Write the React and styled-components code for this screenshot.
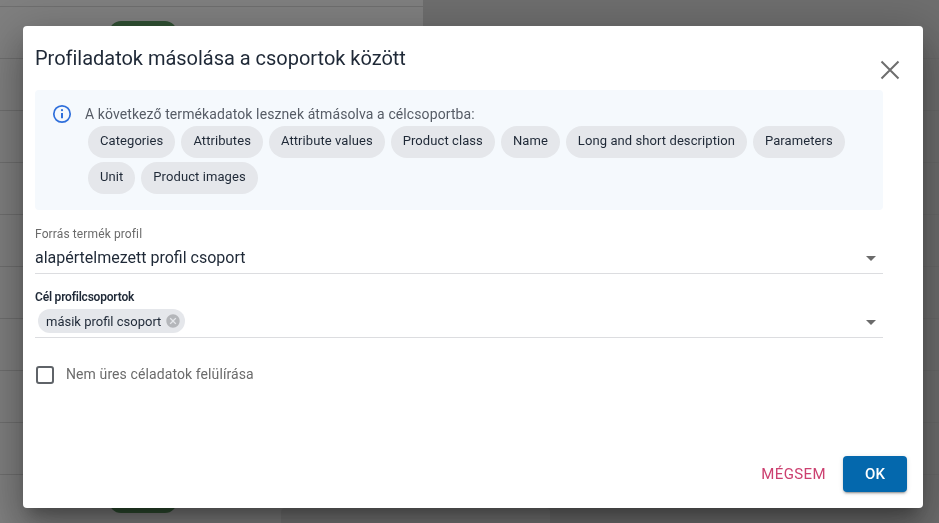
import React from "react";
import styled, { createGlobalStyle } from "styled-components";

const profileFields = [
  "Categories",
  "Attributes",
  "Attribute values",
  "Product class",
  "Name",
  "Long and short description",
  "Parameters",
  "Unit",
  "Product images",
];

const GlobalStyle = createGlobalStyle`
  html, body {
    margin: 0;
    height: 100%;
    overflow: hidden;
    font-family: Roboto, "Liberation Sans", sans-serif;
  }
`;

const Page = styled.div`
  width: 939px;
  height: 523px;
  display: flex;
  overflow: hidden;
  background: #dcdcdc;
`;

const TableColumn = styled.div`
  width: 423px;
  flex-shrink: 0;
  margin-top: -45px;
  background: #fff;
`;

const TableRow = styled.div`
  position: relative;
  height: 52px;
  box-sizing: border-box;
  border-bottom: 1px solid #dedede;
`;

const StatusPill = styled.div`
  position: absolute;
  left: 109px;
  top: 14px;
  width: 68px;
  height: 24px;
  border-radius: 12px;
  background: #5f9f65;
`;

const RightPanel = styled.div`
  flex: 1;
  padding-top: 7px;
`;

const PanelRow = styled.div`
  height: 52px;
  box-sizing: border-box;
  border-bottom: 1px solid #d4d4d4;
`;

const BottomCard = styled.div`
  position: absolute;
  left: 281px;
  top: 508px;
  width: 269px;
  height: 30px;
  border-radius: 4px;
  background: #ececec;
`;

const Backdrop = styled.div`
  position: fixed;
  inset: 0;
  display: flex;
  align-items: flex-start;
  padding: 26px 0 0 23px;
  background: rgba(0, 0, 0, 0.5);
`;

const Dialog = styled.div`
  width: 900px;
  height: 482px;
  box-sizing: border-box;
  display: flex;
  flex-direction: column;
  padding: 0 16px 16px 12px;
  border-radius: 4px;
  background: #fff;
  box-shadow: 0 11px 15px -7px rgba(0, 0, 0, 0.28),
    0 24px 38px 3px rgba(0, 0, 0, 0.2), 0 9px 46px 8px rgba(0, 0, 0, 0.18);
`;

const DialogHeader = styled.div`
  display: flex;
  justify-content: space-between;
  height: 64px;
`;

const Title = styled.h2`
  margin: 20px 0 0;
  font-size: 20px;
  line-height: 24px;
  font-weight: 400;
  letter-spacing: -0.02px;
  color: #1f2937;
`;

const CloseButton = styled.button`
  margin: 32px 5px 0 0;
  padding: 0;
  width: 24px;
  height: 24px;
  border: 0;
  background: none;
  display: flex;
  align-items: center;
  justify-content: center;
`;

const InfoBox = styled.div`
  width: 848px;
  height: 120px;
  box-sizing: border-box;
  display: flex;
  padding: 14px 18px;
  border-radius: 4px;
  background: #f5f9fd;
`;

const InfoIcon = styled.svg`
  width: 20px;
  height: 20px;
  margin: 0 13px 0 -1px;
  flex-shrink: 0;
`;

const InfoBody = styled.div`
  min-width: 0;
`;

const InfoText = styled.div`
  font-size: 14px;
  line-height: 20px;
  letter-spacing: 0.1px;
  color: #565c66;
`;

const ChipList = styled.div`
  display: flex;
  flex-wrap: wrap;
  gap: 4px 6px;
  margin: 2px 0 0 3px;
`;

const Chip = styled.span`
  height: 32px;
  box-sizing: border-box;
  padding: 0 12px 3px;
  display: inline-flex;
  align-items: center;
  border-radius: 16px;
  font-size: 13px;
  letter-spacing: 0.08px;
  color: #1f2937;
  background: #e5e7eb;
`;

const Field = styled.div`
  position: relative;
  width: 848px;
  height: ${(p) => p.$height}px;
  margin-top: ${(p) => p.$top}px;
  box-sizing: border-box;
  border-bottom: 1px solid #dcdde0;
`;

const FieldLabel = styled.div`
  font-size: 12px;
  line-height: 14px;
  font-weight: ${(p) => (p.$strong ? 600 : 400)};
  letter-spacing: ${(p) => (p.$strong ? "-0.2px" : "0.12px")};
  color: ${(p) => (p.$strong ? "#1f2937" : "#6b6b6b")};
`;

const FieldValue = styled.div`
  margin-top: 6px;
  font-size: 16px;
  line-height: 22px;
  color: #1f2937;
`;

const Caret = styled.span`
  position: absolute;
  right: 7px;
  bottom: ${(p) => p.$bottom}px;
  border-left: 5px solid transparent;
  border-right: 5px solid transparent;
  border-top: 5px solid #6b6b6b;
`;

const TagRow = styled.div`
  margin: 5px 0 0 3px;
`;

const Tag = styled.span`
  height: 24px;
  box-sizing: border-box;
  padding: 0 4px 0 8px;
  display: inline-flex;
  align-items: center;
  gap: 4px;
  border-radius: 12px;
  font-size: 13px;
  color: #1f2937;
  background: #e5e7eb;
`;

const CheckRow = styled.label`
  display: flex;
  align-items: flex-start;
  gap: 12px;
  margin: 28px 0 0 1px;
  height: 18px;
  font-size: 14px;
  line-height: 16px;
  letter-spacing: 0.1px;
  color: #6b6b6b;
`;

const CheckBox = styled.span`
  width: 18px;
  height: 18px;
  box-sizing: border-box;
  border: 2px solid #5f6368;
  border-radius: 3px;
`;

const Actions = styled.div`
  margin-top: auto;
  display: flex;
  align-items: center;
  justify-content: flex-end;
  gap: 17px;
`;

const CancelButton = styled.button`
  padding: 0;
  border: 0;
  background: none;
  font: inherit;
  font-size: 15px;
  letter-spacing: 0.4px;
  color: #cc4070;
`;

const OkButton = styled.button`
  width: 64px;
  height: 36px;
  border: 0;
  border-radius: 4px;
  font: inherit;
  font-size: 15px;
  font-weight: 500;
  color: #fff;
  background: #0468ad;
  box-shadow: 0 3px 1px -2px rgba(0, 0, 0, 0.2), 0 2px 2px rgba(0, 0, 0, 0.14),
    0 1px 5px rgba(0, 0, 0, 0.12);
`;

const App = () => {
  const rows = Array.from({ length: 11 });
  const panelRows = Array.from({ length: 10 });

  return (
    <>
      <GlobalStyle />
      <Page>
        <TableColumn>
          {rows.map((_, i) => (
            <TableRow key={i}>{(i === 1 || i === 10) && <StatusPill />}</TableRow>
          ))}
        </TableColumn>
        <RightPanel>
          {panelRows.map((_, i) => (
            <PanelRow key={i} />
          ))}
        </RightPanel>
        <BottomCard />
      </Page>

      <Backdrop>
        <Dialog>
          <DialogHeader>
            <Title>Profiladatok másolása a csoportok között</Title>
            <CloseButton aria-label="close">
              <svg width="24" height="24" viewBox="0 0 24 24" fill="none">
                <path d="M3.5 3.5L20.5 20.5M20.5 3.5L3.5 20.5" stroke="#6e6e6e" strokeWidth="2" />
              </svg>
            </CloseButton>
          </DialogHeader>

          <InfoBox>
            <InfoIcon viewBox="0 0 20 20" fill="none">
              <circle cx="10" cy="10" r="8.2" stroke="#2f6fdb" strokeWidth="1.7" />
              <path d="M10 9v5.2" stroke="#2f6fdb" strokeWidth="2" />
              <circle cx="10" cy="6.2" r="1.1" fill="#2f6fdb" />
            </InfoIcon>
            <InfoBody>
              <InfoText>A következő termékadatok lesznek átmásolva a célcsoportba:</InfoText>
              <ChipList>
                {profileFields.map((field) => (
                  <Chip key={field}>{field}</Chip>
                ))}
              </ChipList>
            </InfoBody>
          </InfoBox>

          <Field $top={17} $height={47}>
            <FieldLabel>Forrás termék profil</FieldLabel>
            <FieldValue>alapértelmezett profil csoport</FieldValue>
            <Caret $bottom={12} />
          </Field>

          <Field $top={16} $height={48}>
            <FieldLabel $strong>Cél profilcsoportok</FieldLabel>
            <TagRow>
              <Tag>
                másik profil csoport
                <svg width="16" height="16" viewBox="0 0 24 24">
                  <path
                    fill="#b4b6ba"
                    d="M12 2C6.47 2 2 6.47 2 12s4.47 10 10 10 10-4.47 10-10S17.53 2 12 2zm5 13.59L15.59 17 12 13.41 8.41 17 7 15.59 10.59 12 7 8.41 8.41 7 12 10.59 15.59 7 17 8.41 13.41 12 17 15.59z"
                  />
                </svg>
              </Tag>
            </TagRow>
            <Caret $bottom={12} />
          </Field>

          <CheckRow>
            <CheckBox />
            Nem üres céladatok felülírása
          </CheckRow>

          <Actions>
            <CancelButton>MÉGSEM</CancelButton>
            <OkButton>OK</OkButton>
          </Actions>
        </Dialog>
      </Backdrop>
    </>
  );
};

export default App;
